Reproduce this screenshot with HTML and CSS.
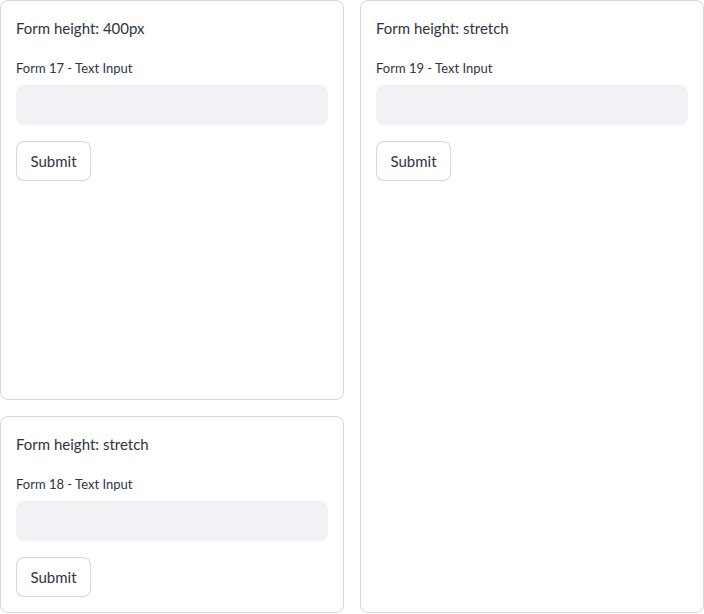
FILE: index.html
```html
<!DOCTYPE html>
<html>
<head>
<meta charset="utf-8">
<link rel="stylesheet" href="styles.css">
</head>
<body>
<div class="page">
  <div class="col">
    <div class="card fixed">
      <div class="title">Form height: 400px</div>
      <div class="label">Form 17 - Text Input</div>
      <div class="input"></div>
      <button class="btn">Submit</button>
    </div>
    <div class="card grow">
      <div class="title">Form height: stretch</div>
      <div class="label">Form 18 - Text Input</div>
      <div class="input"></div>
      <button class="btn">Submit</button>
    </div>
  </div>
  <div class="col">
    <div class="card grow">
      <div class="title">Form height: stretch</div>
      <div class="label">Form 19 - Text Input</div>
      <div class="input"></div>
      <button class="btn">Submit</button>
    </div>
  </div>
</div>
</body>
</html>
```
FILE: styles.css
```css
html, body {
  margin: 0;
  padding: 0;
  background: #ffffff;
}
body {
  font-family: Lato, "Liberation Sans", sans-serif;
  color: rgb(49, 51, 63);
}
.page {
  display: grid;
  grid-template-columns: 344px 344px;
  column-gap: 16px;
  height: 613px;
}
.col {
  display: flex;
  flex-direction: column;
  gap: 16px;
}
.card {
  box-sizing: border-box;
  border: 1px solid rgba(49, 51, 63, 0.2);
  border-radius: 8px;
  padding: 15px;
  display: flex;
  flex-direction: column;
  align-items: flex-start;
}
.fixed { height: 400px; flex: none; }
.grow { flex: 1; }
.title {
  font-size: 15px;
  line-height: 24px;
  height: 24px;
}
.label {
  margin-top: 16px;
  font-size: 13px;
  line-height: 24px;
  height: 25px;
  margin-bottom: 4px;
}
.input {
  align-self: stretch;
  height: 40px;
  background: #f0f2f6;
  border-radius: 8px;
}
.btn {
  margin-top: 16px;
  box-sizing: border-box;
  height: 40px;
  width: 75px;
  background: #fff;
  border: 1px solid rgba(49, 51, 63, 0.2);
  border-radius: 8px;
  font-family: inherit;
  font-size: 15px;
  line-height: 38px;
  padding: 0;
  color: rgb(49, 51, 63);
}
```
